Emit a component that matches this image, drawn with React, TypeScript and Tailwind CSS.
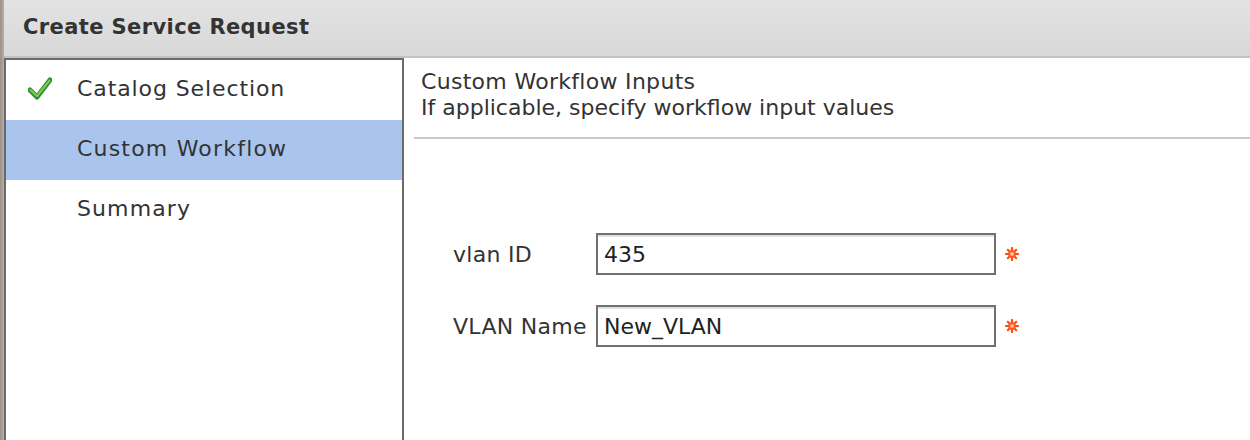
import React from "react";

const font = { fontFamily: '"DejaVu Sans", Verdana, sans-serif' };

function Check() {
  return (
    <svg width="24" height="24" viewBox="0 0 24 24" className="shrink-0">
      <path d="M2 13 L9 20 L22 3" fill="none" stroke="#2f8f3a" strokeWidth="5" strokeLinecap="round" strokeLinejoin="round" />
      <path d="M2.5 13 L9 19 L21.5 3.5" fill="none" stroke="#7ccf4a" strokeWidth="2" strokeLinecap="round" strokeLinejoin="round" />
    </svg>
  );
}

function Star() {
  return (
    <svg width="14" height="14" viewBox="0 0 14 14" className="shrink-0">
      <g stroke="#ff4a12" strokeWidth="2.2" strokeLinecap="round">
        <line x1="7" y1="1" x2="7" y2="13" />
        <line x1="1" y1="7" x2="13" y2="7" />
        <line x1="2.8" y1="2.8" x2="11.2" y2="11.2" />
        <line x1="11.2" y1="2.8" x2="2.8" y2="11.2" />
      </g>
      <circle cx="7" cy="7" r="2" fill="#ffc0a0" />
      <circle cx="7" cy="7" r="3.2" fill="none" stroke="#ff5a20" strokeWidth="1.3" />
    </svg>
  );
}

function Field({ label, value }: { label: string; value: string }) {
  return (
    <div className="flex items-center h-[42px]">
      <div className="w-[143px] text-[22px] text-[#333] tracking-[0.3px]">{label}</div>
      <div className="w-[400px] h-[42px] border-2 border-[#707070] bg-white flex items-center pl-[6px] text-[22px] text-[#222] shadow-[inset_0_2px_0_#e0e0e0]">
        {value}
      </div>
      <div className="ml-[9px] flex items-center">
        <Star />
      </div>
    </div>
  );
}

export default function App() {
  return (
    <div className="w-[1250px] h-[440px] flex overflow-hidden bg-white" style={font}>
      <div className="w-[4px] h-full bg-gradient-to-r from-[#9a8f84] to-[#b7b0a8]" />
      <div className="flex-1 flex flex-col">
        <div className="h-[58px] shrink-0 bg-gradient-to-b from-[#e3e3e3] to-[#d8d8d8] border-b-2 border-[#c2c2c2] flex items-center pl-[19px]">
          <span className="text-[21px] font-bold text-[#333] tracking-[0.4px]">Create Service Request</span>
        </div>
        <div className="flex-1 flex">
          <div className="w-[400px] shrink-0 border-l-2 border-r-2 border-t-2 border-[#6a6a6a] bg-white">
            <div className="h-[60px] flex items-center pl-[22px] gap-[25px] pb-[3px]">
              <Check />
              <span className="text-[22px] text-[#333] tracking-[0.9px]">Catalog Selection</span>
            </div>
            <div className="h-[60px] flex items-center pl-[71px] bg-[#a9c5ee] pb-[3px]">
              <span className="text-[22px] text-[#333] tracking-[1.2px]">Custom Workflow</span>
            </div>
            <div className="h-[60px] flex items-center pl-[71px] pb-[3px]">
              <span className="text-[22px] text-[#333] tracking-[1.1px]">Summary</span>
            </div>
          </div>
          <div className="flex-1 flex flex-col">
            <div className="pl-[17px] pt-[11px] text-[22px] leading-[26px] text-[#333]">
              <div className="tracking-[0.3px]">Custom Workflow Inputs</div>
              <div>If applicable, specify workflow input values</div>
            </div>
            <div className="ml-[10px] mt-[16px] h-[2px] bg-[#c9c9c9]" />
            <div className="pl-[49px] pt-[94px] flex flex-col gap-[30px]">
              <Field label="vlan ID" value="435" />
              <Field label="VLAN Name" value="New_VLAN" />
            </div>
          </div>
        </div>
      </div>
    </div>
  );
}
